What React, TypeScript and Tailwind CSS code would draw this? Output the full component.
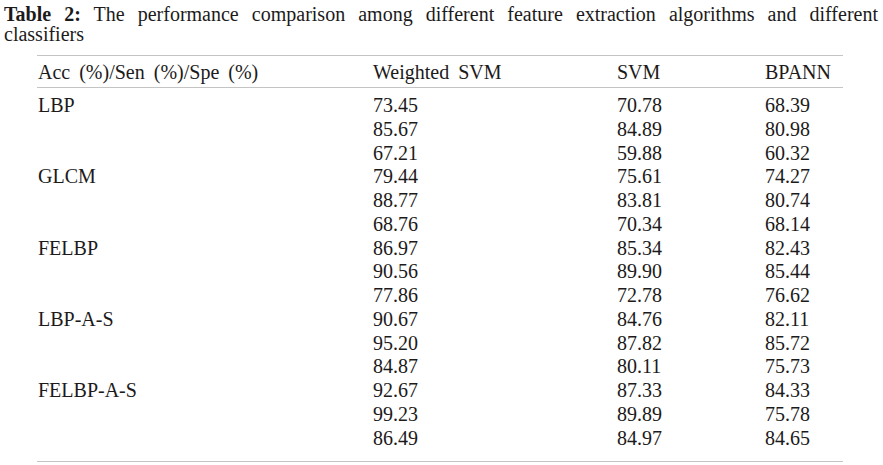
import React from "react";

const groups = [
  { name: "LBP", rows: [["73.45", "70.78", "68.39"], ["85.67", "84.89", "80.98"], ["67.21", "59.88", "60.32"]] },
  { name: "GLCM", rows: [["79.44", "75.61", "74.27"], ["88.77", "83.81", "80.74"], ["68.76", "70.34", "68.14"]] },
  { name: "FELBP", rows: [["86.97", "85.34", "82.43"], ["90.56", "89.90", "85.44"], ["77.86", "72.78", "76.62"]] },
  { name: "LBP-A-S", rows: [["90.67", "84.76", "82.11"], ["95.20", "87.82", "85.72"], ["84.87", "80.11", "75.73"]] },
  { name: "FELBP-A-S", rows: [["92.67", "87.33", "84.33"], ["99.23", "89.89", "75.78"], ["86.49", "84.97", "84.65"]] },
];

const cols = "grid grid-cols-[335px_244px_148px_1fr]";

export default function App() {
  return (
    <div className="w-[883px] h-[465px] bg-white overflow-hidden font-['Liberation_Serif','Times_New_Roman',serif] text-[20px] text-[#1c1a1a] [word-spacing:4px]">
      {/* Caption */}
      <p className="pl-[4px] pr-[5px] pt-[4px] leading-[20px] text-justify">
        <span className="font-bold">Table 2:</span> The performance comparison among different feature extraction
        algorithms and different classifiers
      </p>

      <div className="ml-[37px] w-[806px] mt-[11px]">
        {/* Header */}
        <div className={`${cols} h-[33px] items-center border-y border-[#c4c4c4] pl-[1px]`}>
          <span>Acc (%)/Sen (%)/Spe (%)</span>
          <span>Weighted SVM</span>
          <span>SVM</span>
          <span>BPANN</span>
        </div>

        {/* Body */}
        <div className="pt-[6px] pb-[11px] border-b border-[#c4c4c4] pl-[1px]">
          {groups.map((g) =>
            g.rows.map((r, i) => (
              <div key={g.name + i} className={`${cols} h-[23.75px] leading-[23.75px]`}>
                <span>{i === 0 ? g.name : ""}</span>
                <span>{r[0]}</span>
                <span>{r[1]}</span>
                <span>{r[2]}</span>
              </div>
            ))
          )}
        </div>
      </div>
    </div>
  );
}
